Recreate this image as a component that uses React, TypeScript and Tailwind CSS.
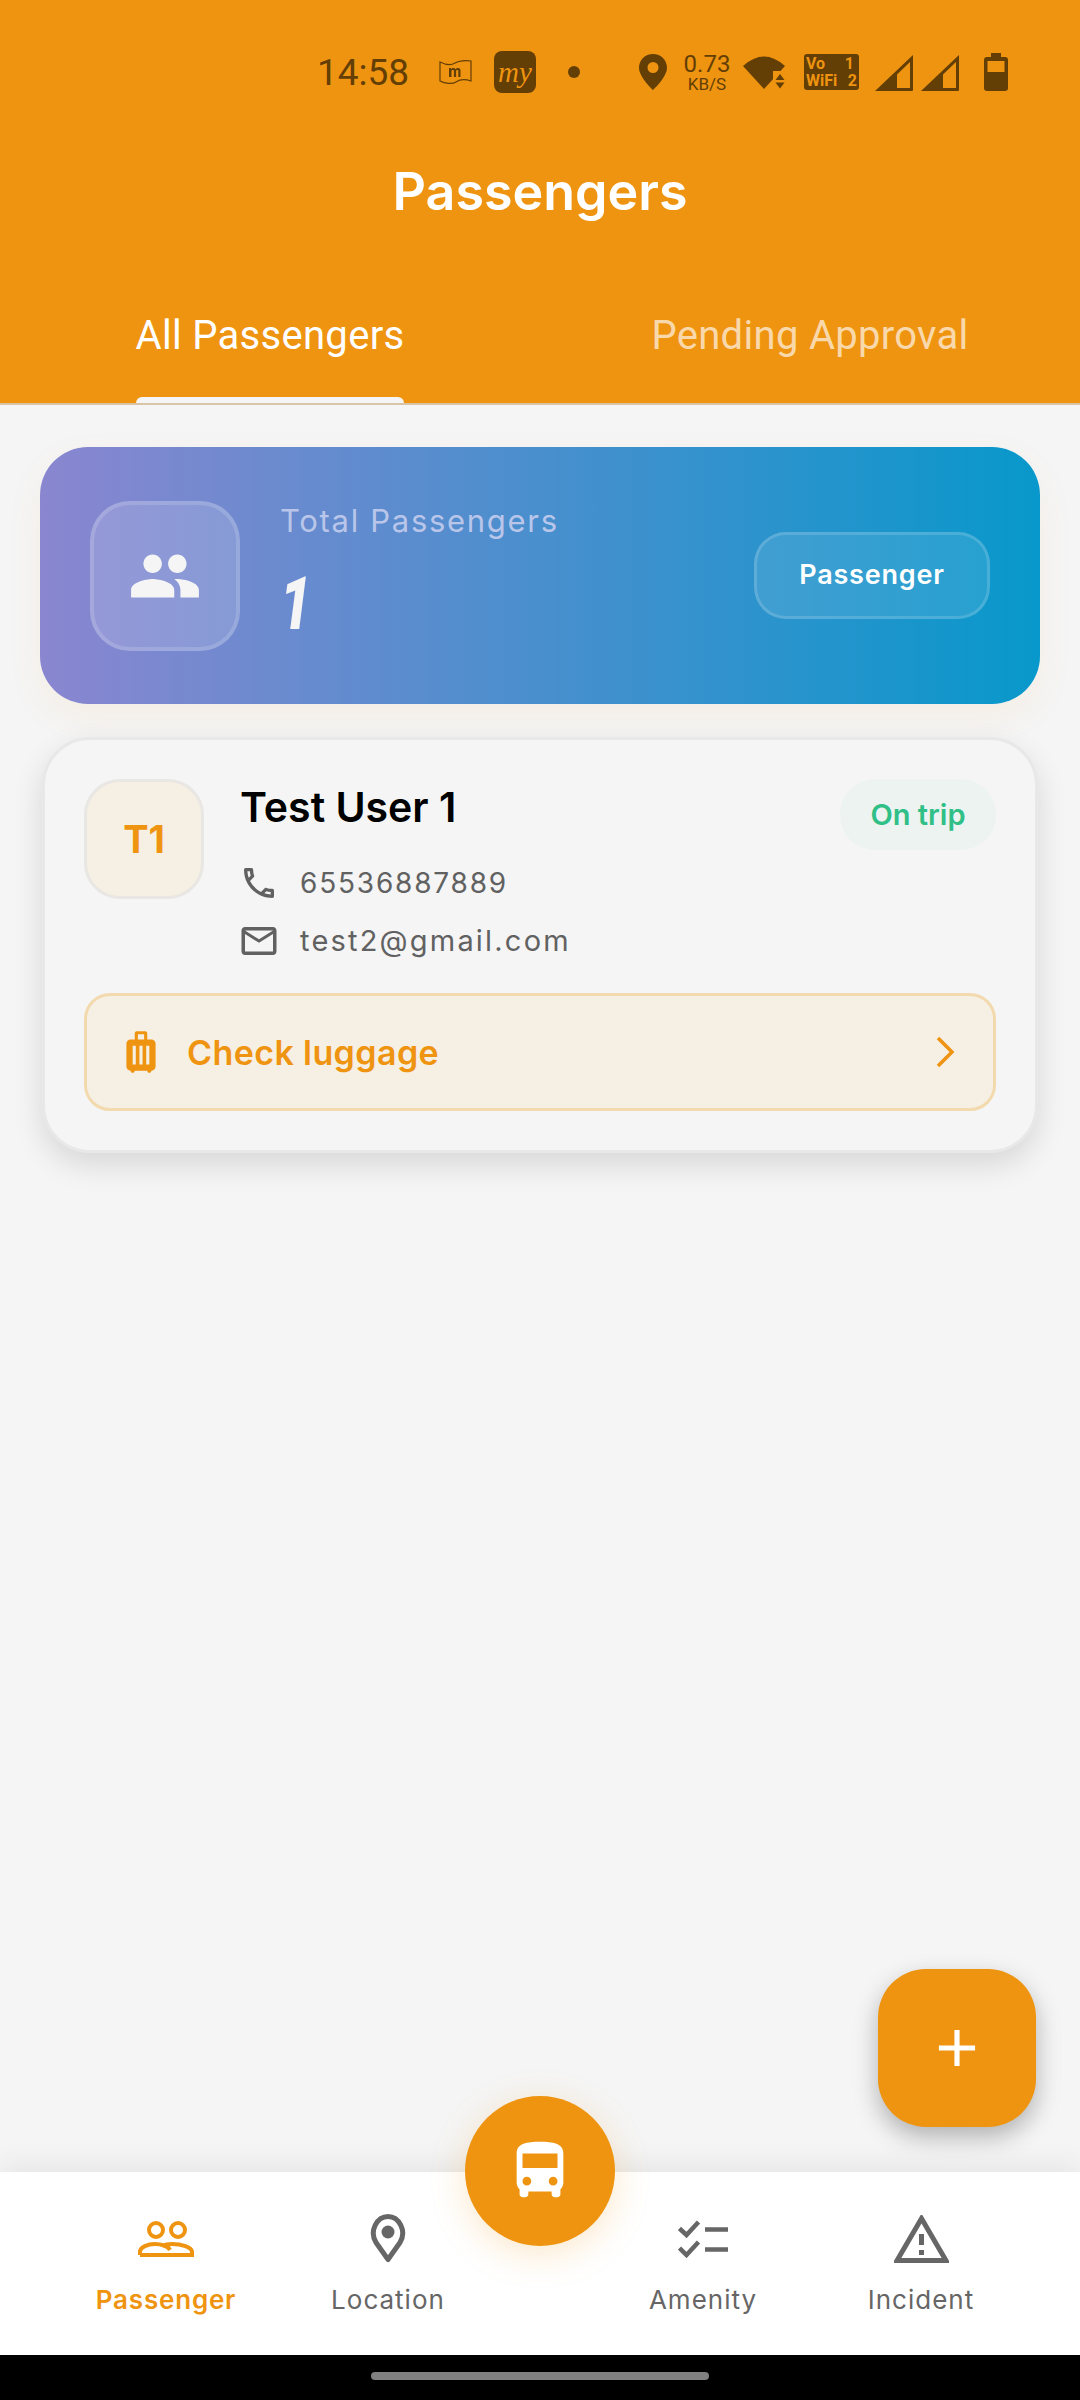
import React from "react";
import { MdPeople, MdOutlinePhone, MdOutlineEmail, MdLuggage, MdDirectionsBus, MdAdd } from "react-icons/md";

const brown = "#633e05";
const orange = "#ef9410";
const gray = "#666666";

function Signal({ className }: { className: string }) {
  return (
    <svg className={className} width="38" height="37" viewBox="0 0 38 37">
      <path fillRule="evenodd" d="M38 1v35a1 1 0 0 1-1 1H0zM35 8L22 20.500V34h13z" fill={brown} />
    </svg>
  );
}

function StatusBar() {
  return (
    <div className="flex items-center h-[72px] mt-[36px] pl-[317px] text-[#633e05]" style={{ fontFamily: "Roboto, sans-serif" }}>
      <span className="text-[37px] leading-none w-[90px] whitespace-nowrap">14:58</span>
      <svg className="ml-[32px]" width="33" height="30" viewBox="0 0 33 30">
        <path d="M1 5c6 3 12 3 15 1s11-3 16-2v20c-6-2-12-1-15 1s-11 2-16-1z" fill="none" stroke={brown} strokeWidth="1.200" />
        <path d="M10 20v-9h2v1.200c1-1.500 3.500-1.700 4.500 0 1.200-1.700 5-1.900 5 1.300V20h-2.200v-6c0-1.400-2-1.400-2.200 0v6h-2.200v-6c0-1.400-2.200-1.400-2.400 0v6z" fill={brown} />
      </svg>
      <div className="ml-[22px] w-[42px] h-[42px] rounded-[8px] bg-[#633e05] flex items-center justify-center text-[#ef9410] italic text-[29px] leading-none" style={{ fontFamily: "'Liberation Serif', serif" }}>my</div>
      <div className="ml-[32px] w-[12px] h-[12px] rounded-full bg-[#633e05]" />
      <svg className="ml-[59px]" width="28" height="36" viewBox="0 0 28 36">
        <path fillRule="evenodd" d="M14 0C6 0 0 6 0 14c0 9 14 22 14 22s14-13 14-22C28 6 22 0 14 0zm0 19a5.500 5.500 0 1 1 0-11 5.500 5.500 0 0 1 0 11z" fill={brown} />
      </svg>
      <div className="ml-[18px] w-[44px] flex flex-col items-center">
        <span className="text-[24px] leading-[24px]">0.73</span>
        <span className="text-[17px] leading-[17px]">KB/S</span>
      </div>
      <svg className="ml-[14px]" width="42" height="36" viewBox="0 0 42 36">
        <path d="M0 12Q21-7 42 12L21 35z" fill={brown} />
        <rect x="30" y="17" width="12" height="19" fill={orange} />
        <path d="M37 20l4.500 6h-9zM32.500 28.500h9L37 34.500z" fill={brown} />
      </svg>
      <div className="ml-[19px] w-[55px] h-[36px] rounded-[3px] bg-[#633e05] text-[#ef9410] font-bold text-[16px] leading-[17px] px-[2px] flex flex-col justify-center">
        <div className="flex justify-between"><span>Vo</span><span className="pr-[3px]">1</span></div>
        <div className="flex justify-between"><span>WiFi</span><span>2</span></div>
      </div>
      <Signal className="ml-[16px]" />
      <Signal className="ml-[8px]" />
      <svg className="ml-[25px]" width="24" height="38" viewBox="0 0 24 38">
        <path fillRule="evenodd" d="M7 0h10v4h4a3 3 0 0 1 3 3v28a3 3 0 0 1-3 3H3a3 3 0 0 1-3-3V7a3 3 0 0 1 3-3h4zM3.500 8v11h17V8z" fill={brown} />
      </svg>
    </div>
  );
}

function Header() {
  return (
    <header className="bg-[#ef9410] h-[405px] flex flex-col border-b-2 border-[#d9c4a8] shrink-0">
      <StatusBar />
      <h1 className="text-white text-center font-semibold text-[52px] leading-none mt-[58px]">Passengers</h1>
      <div className="grid grid-cols-2 mt-[100px] flex-1" style={{ fontFamily: "Roboto, sans-serif" }}>
        <div className="flex flex-col items-center justify-between">
          <span className="text-white text-[40px] tracking-[0.3px] leading-[44px] mt-[-4px]">All Passengers</span>
          <div className="w-[268px] h-[6px] rounded-t-[6px] bg-[#f5f5f5]" />
        </div>
        <div className="flex flex-col items-center">
          <span className="text-[#f9d9ab] text-[40px] tracking-[0.3px] leading-[44px] mt-[-4px]">Pending Approval</span>
        </div>
      </div>
    </header>
  );
}

function StatCard() {
  return (
    <section className="h-[257px] rounded-[48px] flex items-center pl-[50px] pr-[50px] text-white shadow-[0_14px_36px_rgba(239,148,16,0.07)]" style={{ backgroundImage: "linear-gradient(90deg,#8a86d0,#0898cb)" }}>
      <div className="w-[150px] h-[150px] rounded-[40px] bg-white/15 border-[4px] border-white/15 flex items-center justify-center shrink-0">
        <MdPeople size={74} color="#f5f5f5" />
      </div>
      <div className="ml-[40px] flex-1 self-start mt-[52px]">
        <div className="text-[31px] leading-[44px] text-[#b9c6ea] tracking-[1.7px]">Total Passengers</div>
        <div className="text-[74px] leading-[80px] font-black italic text-[#f5f5f5] mt-[21px] origin-left scale-x-[0.75]" style={{ fontFamily: "Roboto, sans-serif" }}>1</div>
      </div>
      <div className="w-[236px] h-[87px] rounded-[32px] bg-white/10 border-[3px] border-white/15 flex items-center justify-center text-[27px] font-semibold tracking-[0.8px]">Passenger</div>
    </section>
  );
}

function PassengerCard() {
  return (
    <section className="mt-[33px] mx-[2px] h-[416px] rounded-[48px] bg-[#f5f5f5] border-[3px] border-[#e8e8e8] shadow-[0_12px_30px_rgba(0,0,0,0.12)] px-[39px] pt-[39px]">
      <div className="flex items-start">
        <div className="w-[120px] h-[120px] rounded-[36px] bg-[#f6efe3] border-[3px] border-[#e9e7e3] flex items-center justify-center text-[38px] font-bold text-[#ef9410] shrink-0">T1</div>
        <div className="ml-[36px] flex-1">
          <div className="text-[41px] leading-[52px] font-semibold text-black mt-[2px]">Test User 1</div>
          <div className="flex items-center text-[#616161] text-[28px] tracking-[1.8px] mt-[32px] h-[36px]">
            <MdOutlinePhone size={40} className="ml-[-1px] mr-[21px]" />65536887889
          </div>
          <div className="flex items-center text-[#616161] text-[29px] tracking-[2.2px] mt-[22px] h-[36px]">
            <MdOutlineEmail size={42} className="ml-[-2px] mr-[20px]" />test2@gmail.com
          </div>
        </div>
        <div className="w-[156px] h-[71px] rounded-[35px] bg-[#edf3f0] flex items-center justify-center text-[#2fbf87] text-[29px] font-semibold">On trip</div>
      </div>
      <div className="mt-[34px] h-[118px] rounded-[26px] bg-[#f6efe3] border-[3px] border-[#f3d9ae] flex items-center pl-[29px] pr-[38px] text-[#ef9410]">
        <MdLuggage size={50} className="shrink-0" />
        <span className="ml-[21px] text-[34px] font-semibold flex-1 tracking-[0.4px]">Check luggage</span>
        <svg width="20" height="32" viewBox="0 0 20 32" fill="none" stroke={orange} strokeWidth="3.500">
          <path d="M3 2l14 14L3 30" />
        </svg>
      </div>
    </section>
  );
}

function NavItem({ icon, label, active, className }: { icon: React.ReactNode; label: string; active?: boolean; className: string }) {
  return (
    <div className={`flex flex-col items-center w-[140px] ${className}`}>
      <div className="h-[56px] flex items-center justify-center">{icon}</div>
      <span className={`text-[26px] leading-[36px] mt-[15px] whitespace-nowrap ${active ? "font-semibold text-[#ef9410] tracking-[0.8px]" : "text-[#666666] tracking-[1px]"}`}>{label}</span>
    </div>
  );
}

const PassengerIcon = (
  <svg width="56" height="36" viewBox="0 0 56 36" fill="none" stroke={orange} strokeWidth="4">
    <circle cx="18" cy="9" r="7" />
    <circle cx="40" cy="9" r="7" />
    <path d="M2 34v-3c0-5 8-8 15-8 6 0 13 2 15 6M24 25c3-1.500 6-2 10-2 9 0 20 3 20 8v3H2" />
  </svg>
);

const PinIcon = (
  <svg width="36" height="50" viewBox="0 0 36 50">
    <path d="M18 45.500 6 28.500C-1 17 7 2.500 18 2.500s19 14.500 12 26z" fill="none" stroke={gray} strokeWidth="5" strokeLinejoin="round" />
    <circle cx="18" cy="18" r="6.500" fill={gray} />
  </svg>
);

const AmenityIcon = (
  <svg width="50" height="38" viewBox="0 0 50 38" fill="none" stroke={gray} strokeWidth="4.500">
    <path d="M1.500 8.500l7 6.500L20.500 2M1.500 28l7 7 12-13" />
    <path d="M27 9.500h23M27 29.500h23" />
  </svg>
);

const IncidentIcon = (
  <svg width="55" height="48" viewBox="0 0 55 48">
    <path d="M27.500 3.500 3 45.500h49z" fill="none" stroke={gray} strokeWidth="5" />
    <rect x="25" y="19" width="5" height="11" fill={gray} />
    <rect x="25" y="35" width="5" height="5" fill={gray} />
  </svg>
);

function BottomNav() {
  return (
    <nav className="h-[183px] bg-white relative shrink-0 shadow-[0_-6px_28px_rgba(0,0,0,0.07)] pt-[39px] pl-[96px] flex items-start">
      <NavItem active label="Passenger" icon={PassengerIcon} className="" />
      <NavItem label="Location" icon={PinIcon} className="ml-[82px]" />
      <NavItem label="Amenity" icon={AmenityIcon} className="ml-[175px]" />
      <NavItem label="Incident" icon={IncidentIcon} className="ml-[78px]" />
      <div className="absolute left-[465px] top-[-76px] w-[150px] h-[150px] rounded-full bg-[#ef9410] shadow-[0_8px_36px_rgba(239,148,16,0.22)] flex items-center justify-center">
        <MdDirectionsBus size={70} color="#fff" />
      </div>
    </nav>
  );
}

export default function App() {
  return (
    <div className="w-[1080px] h-[2400px] bg-[#f5f5f5] flex flex-col relative overflow-hidden" style={{ fontFamily: "Inter, sans-serif" }}>
      <Header />
      <main className="flex-1 px-[40px] pt-[42px]">
        <StatCard />
        <PassengerCard />
      </main>
      <button className="absolute left-[878px] top-[1969px] w-[158px] h-[158px] rounded-[48px] bg-[#ef9410] shadow-[0_10px_24px_rgba(0,0,0,0.28)] flex items-center justify-center">
        <MdAdd size={62} color="#fff" />
      </button>
      <BottomNav />
      <div className="h-[45px] bg-black flex justify-center pt-[17px] shrink-0">
        <div className="w-[338px] h-[8px] rounded-full bg-[#808080]" />
      </div>
    </div>
  );
}
